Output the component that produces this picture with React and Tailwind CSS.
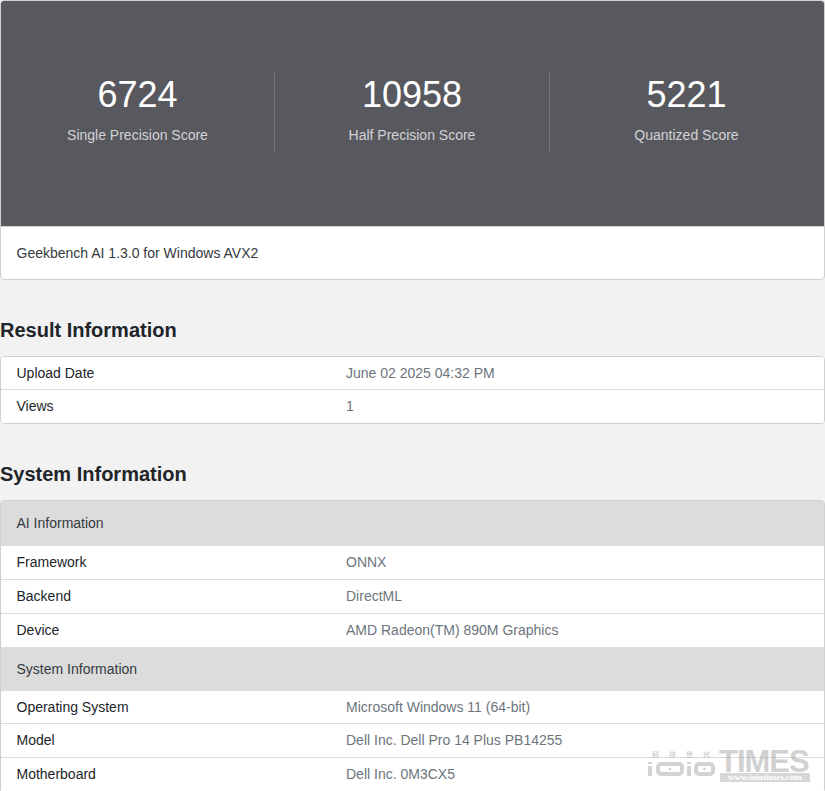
const scores = [
  ["6724", "Single Precision Score", "w-[274px] border-r border-[#77787d]"],
  ["10958", "Half Precision Score", "w-[275px] border-r border-[#77787d]"],
  ["5221", "Quantized Score", "flex-1 pr-px"],
];

function Row({ k, v, h, pb }) {
  return (
    <div className={`flex items-center bg-white ${h} ${pb}`}>
      <div className="w-[345px] pl-[15.5px] text-[#212529]">{k}</div>
      <div className="text-[#6c757d]">{v}</div>
    </div>
  );
}

function Section({ title, h, pb }) {
  return (
    <div className={`flex items-center bg-[#dcdcdc] pl-[15.5px] text-[#343a40] ${h} ${pb}`}>{title}</div>
  );
}

function Watermark() {
  return (
    <div className="pointer-events-none absolute left-[646px] top-[748px] h-[36px] w-[165px] opacity-45">
      <div className="absolute left-[6px] top-[2px] flex w-[58px] justify-between font-['Noto_Sans_CJK_TC',sans-serif] text-[7px] font-bold leading-[8px] text-[#9a9a9a]">
        <span>科</span><span>技</span><span>世</span><span>代</span>
      </div>
      <svg className="absolute left-0 top-[11px]" width="72" height="18" viewBox="0 0 72 18" fill="none" stroke="#a0a0a0" strokeWidth="4">
        <path d="M4 3v2M4 7v10" />
        <rect x="12" y="5" width="24" height="10" rx="3" />
        <path d="M43 3v2M43 7v10" />
        <rect x="50" y="5" width="17" height="10" rx="3" />
        <circle cx="24" cy="10" r="1.4" fill="#a0a0a0" stroke="none" />
        <circle cx="58.5" cy="10" r="1.4" fill="#a0a0a0" stroke="none" />
      </svg>
      <div className="absolute left-[73px] top-[3px] font-['Liberation_Sans',sans-serif] text-[31px] font-bold leading-[22px] tracking-[-1px] text-[#9a9a9a]">TIMES</div>
      <div className="absolute left-[74px] top-[25px] h-[9px] w-[90px] bg-[#a8a8a8] text-center font-['Liberation_Serif',serif] text-[9px] font-bold leading-[9px] text-white">www.ioiotimes.com</div>
    </div>
  );
}

export default function App() {
  return (
    <div className="relative h-[791px] w-[825px] overflow-hidden bg-[#f2f2f2] font-['Liberation_Sans',sans-serif] text-sm">
      <div className="overflow-hidden rounded-[4px] border border-[#d0d0d0] bg-white">
        <div className="flex h-[225px] bg-[#58595f] pt-[72px]">
          {scores.map(([n, l, c]) => (
            <div key={l} className={`h-[80px] text-center ${c}`}>
              <div className="text-[36px] leading-[43px] text-white">{n}</div>
              <div className="mt-[11px] text-[14px] leading-[17px] text-[#d3d3d5]">{l}</div>
            </div>
          ))}
        </div>
        <div className="flex h-[53px] items-center border-t border-[#d0d0d0] pl-[15.5px] text-[#343a40]">
          Geekbench AI 1.3.0 for Windows AVX2
        </div>
      </div>

      <h2 className="mt-[38px] text-[20px] font-bold leading-[24px] text-[#212529]">Result Information</h2>
      <div className="mt-[14px] divide-y divide-[#dcdcdc] overflow-hidden rounded-[4px] border border-[#d0d0d0] bg-white">
        <Row k="Upload Date" v="June 02 2025 04:32 PM" h="h-[33px]" />
        <Row k="Views" v="1" h="h-[33px]" pb="pb-[2px]" />
      </div>

      <h2 className="mt-[38px] text-[20px] font-bold leading-[24px] text-[#212529]">System Information</h2>
      <div className="mt-[14px] overflow-hidden rounded-[4px] border border-[#d0d0d0] bg-white">
        <Section title="AI Information" h="h-[45px]" pb="pb-[2px]" />
        <div className="divide-y divide-[#dcdcdc]">
          <Row k="Framework" v="ONNX" h="h-[34px]" pb="pb-[2px]" />
          <Row k="Backend" v="DirectML" h="h-[34px]" pb="pb-[2px]" />
          <Row k="Device" v="AMD Radeon(TM) 890M Graphics" h="h-[33px]" pb="pb-[2px]" />
        </div>
        <Section title="System Information" h="h-[44px]" />
        <div className="divide-y divide-[#dcdcdc]">
          <Row k="Operating System" v="Microsoft Windows 11 (64-bit)" h="h-[33px]" />
          <Row k="Model" v="Dell Inc. Dell Pro 14 Plus PB14255" h="h-[34px]" pb="pb-[2px]" />
          <Row k="Motherboard" v="Dell Inc. 0M3CX5" h="h-[34px]" pb="pb-[2px]" />
        </div>
      </div>

      <Watermark />
    </div>
  );
}
